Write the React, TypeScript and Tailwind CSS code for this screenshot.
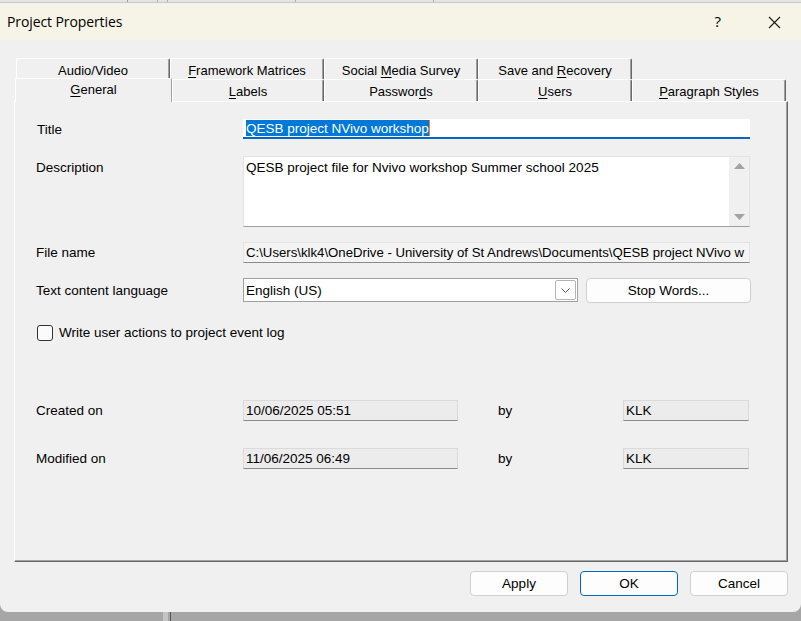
import React from 'react';

type TabProps = {
  pre: string;
  mn?: string;
  post?: string;
  className?: string;
};

function Tab({ pre, mn, post, className }: TabProps) {
  return (
    <div
      className={
        'flex items-center justify-center rounded-t-[2px] border-t border-l border-r border-t-white border-l-white border-r-[#696969] bg-[#f0f0f0] shadow-[inset_-1px_0_0_#a0a0a0] ' +
        (className ?? '')
      }
    >
      <span className="text-[13px] leading-[15px] text-black">
        {pre}
        {mn && <span className="underline underline-offset-2">{mn}</span>}
        {post}
      </span>
    </div>
  );
}

function Caret() {
  return <span className="inline-block h-[16px] w-px bg-[#f08030] align-top" />;
}

function ReadOnlyField({ value, className }: { value: string; className?: string }) {
  return (
    <div
      className={
        'flex h-[21px] items-center overflow-hidden whitespace-nowrap border border-[#dadada] border-b-[#8a8a8a] bg-[#ececec] pl-[2px] pt-px text-black ' +
        (className ?? '')
      }
    >
      {value}
    </div>
  );
}

function DialogButton({ label, primary }: { label: string; primary?: boolean }) {
  return (
    <button
      className={
        'flex h-[25px] w-[98px] items-center justify-center rounded-[4px] border bg-[#fdfdfd] pt-px text-[13.5px] text-black ' +
        (primary ? 'border-[#0067c0]' : 'border-[#d0d0d0]')
      }
    >
      {label}
    </button>
  );
}

export default function App() {
  return (
    <div className="flex h-[621px] w-[801px] flex-col overflow-hidden bg-[#a6a6a6] font-['Liberation_Sans',Arial,sans-serif]">
      {/* window behind the dialog */}
      <div className="flex h-[3px] shrink-0 border-b border-[#c8c8c8] bg-[#e4e4e4]">
        <div className="ml-[127px] h-full w-px bg-[#9a9a9a]" />
        <div className="ml-[29px] h-full w-px bg-[#b0b0b0]" />
        <div className="ml-[9px] h-full w-px bg-[#b0b0b0]" />
        <div className="ml-[127px] h-full w-px bg-[#b0b0b0]" />
        <div className="ml-[137px] h-full w-px bg-[#b0b0b0]" />
      </div>

      <div className="flex h-[609px] shrink-0 flex-col overflow-hidden rounded-b-[8px] bg-[#f0f0f0]">
        {/* title bar */}
        <div className="flex h-[37px] shrink-0 items-center bg-[#f6f4e6] pl-[7px] pr-[20px] font-['Open_Sans','Noto_Sans',sans-serif] text-[14px] text-black">
          <span className="flex-1 tracking-[-0.1px]">Project Properties</span>
          <span className="mr-[47px] text-[15px]">?</span>
          <svg width="13" height="13" viewBox="0 0 13 13" className="mt-[1px]">
            <path d="M1 1 L12 12 M12 1 L1 12" stroke="#1a1a1a" strokeWidth="1.1" />
          </svg>
        </div>

        {/* body */}
        <div className="flex flex-1 flex-col pl-[14px] pr-[13px] pt-[18px]">
          {/* tab rows */}
          <div className="ml-[2px] flex h-[21px]">
            <Tab pre="Audio/Video" className="w-[154px] pt-[2px]" />
            <Tab pre="" mn="F" post="ramework Matrices" className="w-[154px] pt-[2px]" />
            <Tab pre="Social " mn="M" post="edia Survey" className="w-[154px] pt-[2px]" />
            <Tab pre="Save and " mn="R" post="ecovery" className="w-[154px] pt-[2px]" />
          </div>
          <div className="ml-[1px] flex h-[22px] items-end">
            <Tab pre="" mn="G" post="eneral" className="relative z-10 -mb-px h-[24px] w-[157px] border-r-[#a0a0a0] pb-[3px] shadow-none" />
            <Tab pre="" mn="L" post="abels" className="h-[22px] w-[152px] pt-[2px]" />
            <Tab pre="Passwor" mn="d" post="s" className="h-[22px] w-[154px] pt-[2px]" />
            <Tab pre="" mn="U" post="sers" className="h-[22px] w-[154px] pt-[2px]" />
            <Tab pre="" mn="P" post="aragraph Styles" className="h-[22px] w-[154px] pt-[2px]" />
          </div>

          {/* tab panel */}
          <div className="flex h-[461px] w-[774px] flex-col border border-t-white border-l-white border-r-[#696969] border-b-[#696969] pl-[21px] pt-[17px] text-[13.5px] text-black shadow-[inset_-1px_-1px_0_#a0a0a0]">
            {/* Title */}
            <div className="flex h-[20px] items-center">
              <span className="w-[207px] pl-px pt-[3px]">Title</span>
              <div className="flex h-[20px] w-[507px] items-start border-b-2 border-[#0067c0] bg-white pl-[3px] pt-[1px]">
                <span className="h-[16px] bg-[#0078d7] leading-[17px] text-white">QESB project NVivo workshop</span>
                <Caret />
              </div>
            </div>

            {/* Description */}
            <div className="mt-[17px] flex h-[71px]">
              <span className="w-[207px] pt-[4px] leading-[16px]">Description</span>
              <div className="flex h-[71px] w-[507px] border border-[#e3e3e3] border-b-[#a0a0a0] bg-white">
                <div className="flex-1 pl-[2px] pt-[3px] leading-[16px]">QESB project file for Nvivo workshop Summer school 2025</div>
                <div className="flex w-[20px] flex-col items-center justify-between bg-[#f0f0f0] pb-[6px] pt-[6px]">
                  <svg width="11" height="6" viewBox="0 0 11 6">
                    <path d="M5.5 0 L11 6 L0 6 Z" fill="#a3a3a3" />
                  </svg>
                  <svg width="11" height="6" viewBox="0 0 11 6">
                    <path d="M0 0 L11 0 L5.5 6 Z" fill="#a3a3a3" />
                  </svg>
                </div>
              </div>
            </div>

            {/* File name */}
            <div className="mt-[15px] flex h-[21px] items-center">
              <span className="w-[207px] pt-[2px]">File name</span>
              <div className="flex h-[21px] w-[507px] items-center overflow-hidden whitespace-nowrap border border-[#e3e3e3] border-b-[#8a8a8a] bg-[#f4f4f4] pl-[2px] pt-px text-[13.2px]">
                C:\Users\klk4\OneDrive - University of St Andrews\Documents\QESB project NVivo w
              </div>
            </div>

            {/* Text content language */}
            <div className="mt-[15px] flex h-[25px] items-start">
              <span className="flex h-[24px] w-[207px] items-center pt-[2px]">Text content language</span>
              <div className="flex h-[24px] w-[335px] items-center border border-[#a0a0a0] bg-white pl-[2px] pr-px">
                <span className="flex-1 pt-[2px]">English (US)</span>
                <div className="flex h-[20px] w-[21px] items-center justify-center rounded-[2px] border border-[#b4b4b4] bg-white">
                  <svg width="9" height="5" viewBox="0 0 9 5">
                    <path d="M0.5 0.5 L4.5 4.5 L8.5 0.5" fill="none" stroke="#5a5a5a" strokeWidth="1" />
                  </svg>
                </div>
              </div>
              <button className="ml-[8px] flex h-[25px] w-[165px] items-center justify-center rounded-[4px] border border-[#d0d0d0] bg-[#fdfdfd] pt-px">
                Stop Words...
              </button>
            </div>

            {/* checkbox */}
            <div className="mt-[22px] flex h-[16px] items-center">
              <div className="ml-px h-[16px] w-[16px] shrink-0 rounded-[3px] border border-[#333333] bg-[#fbfbfb]" />
              <span className="ml-[6px] pt-px">Write user actions to project event log</span>
            </div>

            {/* Created on */}
            <div className="mt-[59px] flex h-[21px] items-center">
              <span className="w-[207px] pt-[2px]">Created on</span>
              <ReadOnlyField value="10/06/2025 05:51" className="w-[215px]" />
              <span className="ml-[40px] w-[125px] pt-[2px]">by</span>
              <ReadOnlyField value="KLK" className="w-[126px]" />
            </div>

            {/* Modified on */}
            <div className="mt-[27px] flex h-[21px] items-center">
              <span className="w-[207px] pt-[2px]">Modified on</span>
              <ReadOnlyField value="11/06/2025 06:49" className="w-[215px]" />
              <span className="ml-[40px] w-[125px] pt-[2px]">by</span>
              <ReadOnlyField value="KLK" className="w-[126px]" />
            </div>
          </div>

          {/* dialog buttons */}
          <div className="mt-[9px] flex justify-end gap-[12px]">
            <DialogButton label="Apply" />
            <DialogButton label="OK" primary />
            <DialogButton label="Cancel" />
          </div>
        </div>
      </div>

      {/* window behind, below the dialog */}
      <div className="flex flex-1">
        <div className="ml-[163px] h-full w-[5px] bg-[#c4c4c4]" />
        <div className="ml-[2px] h-full w-px bg-[#555555]" />
      </div>
    </div>
  );
}
